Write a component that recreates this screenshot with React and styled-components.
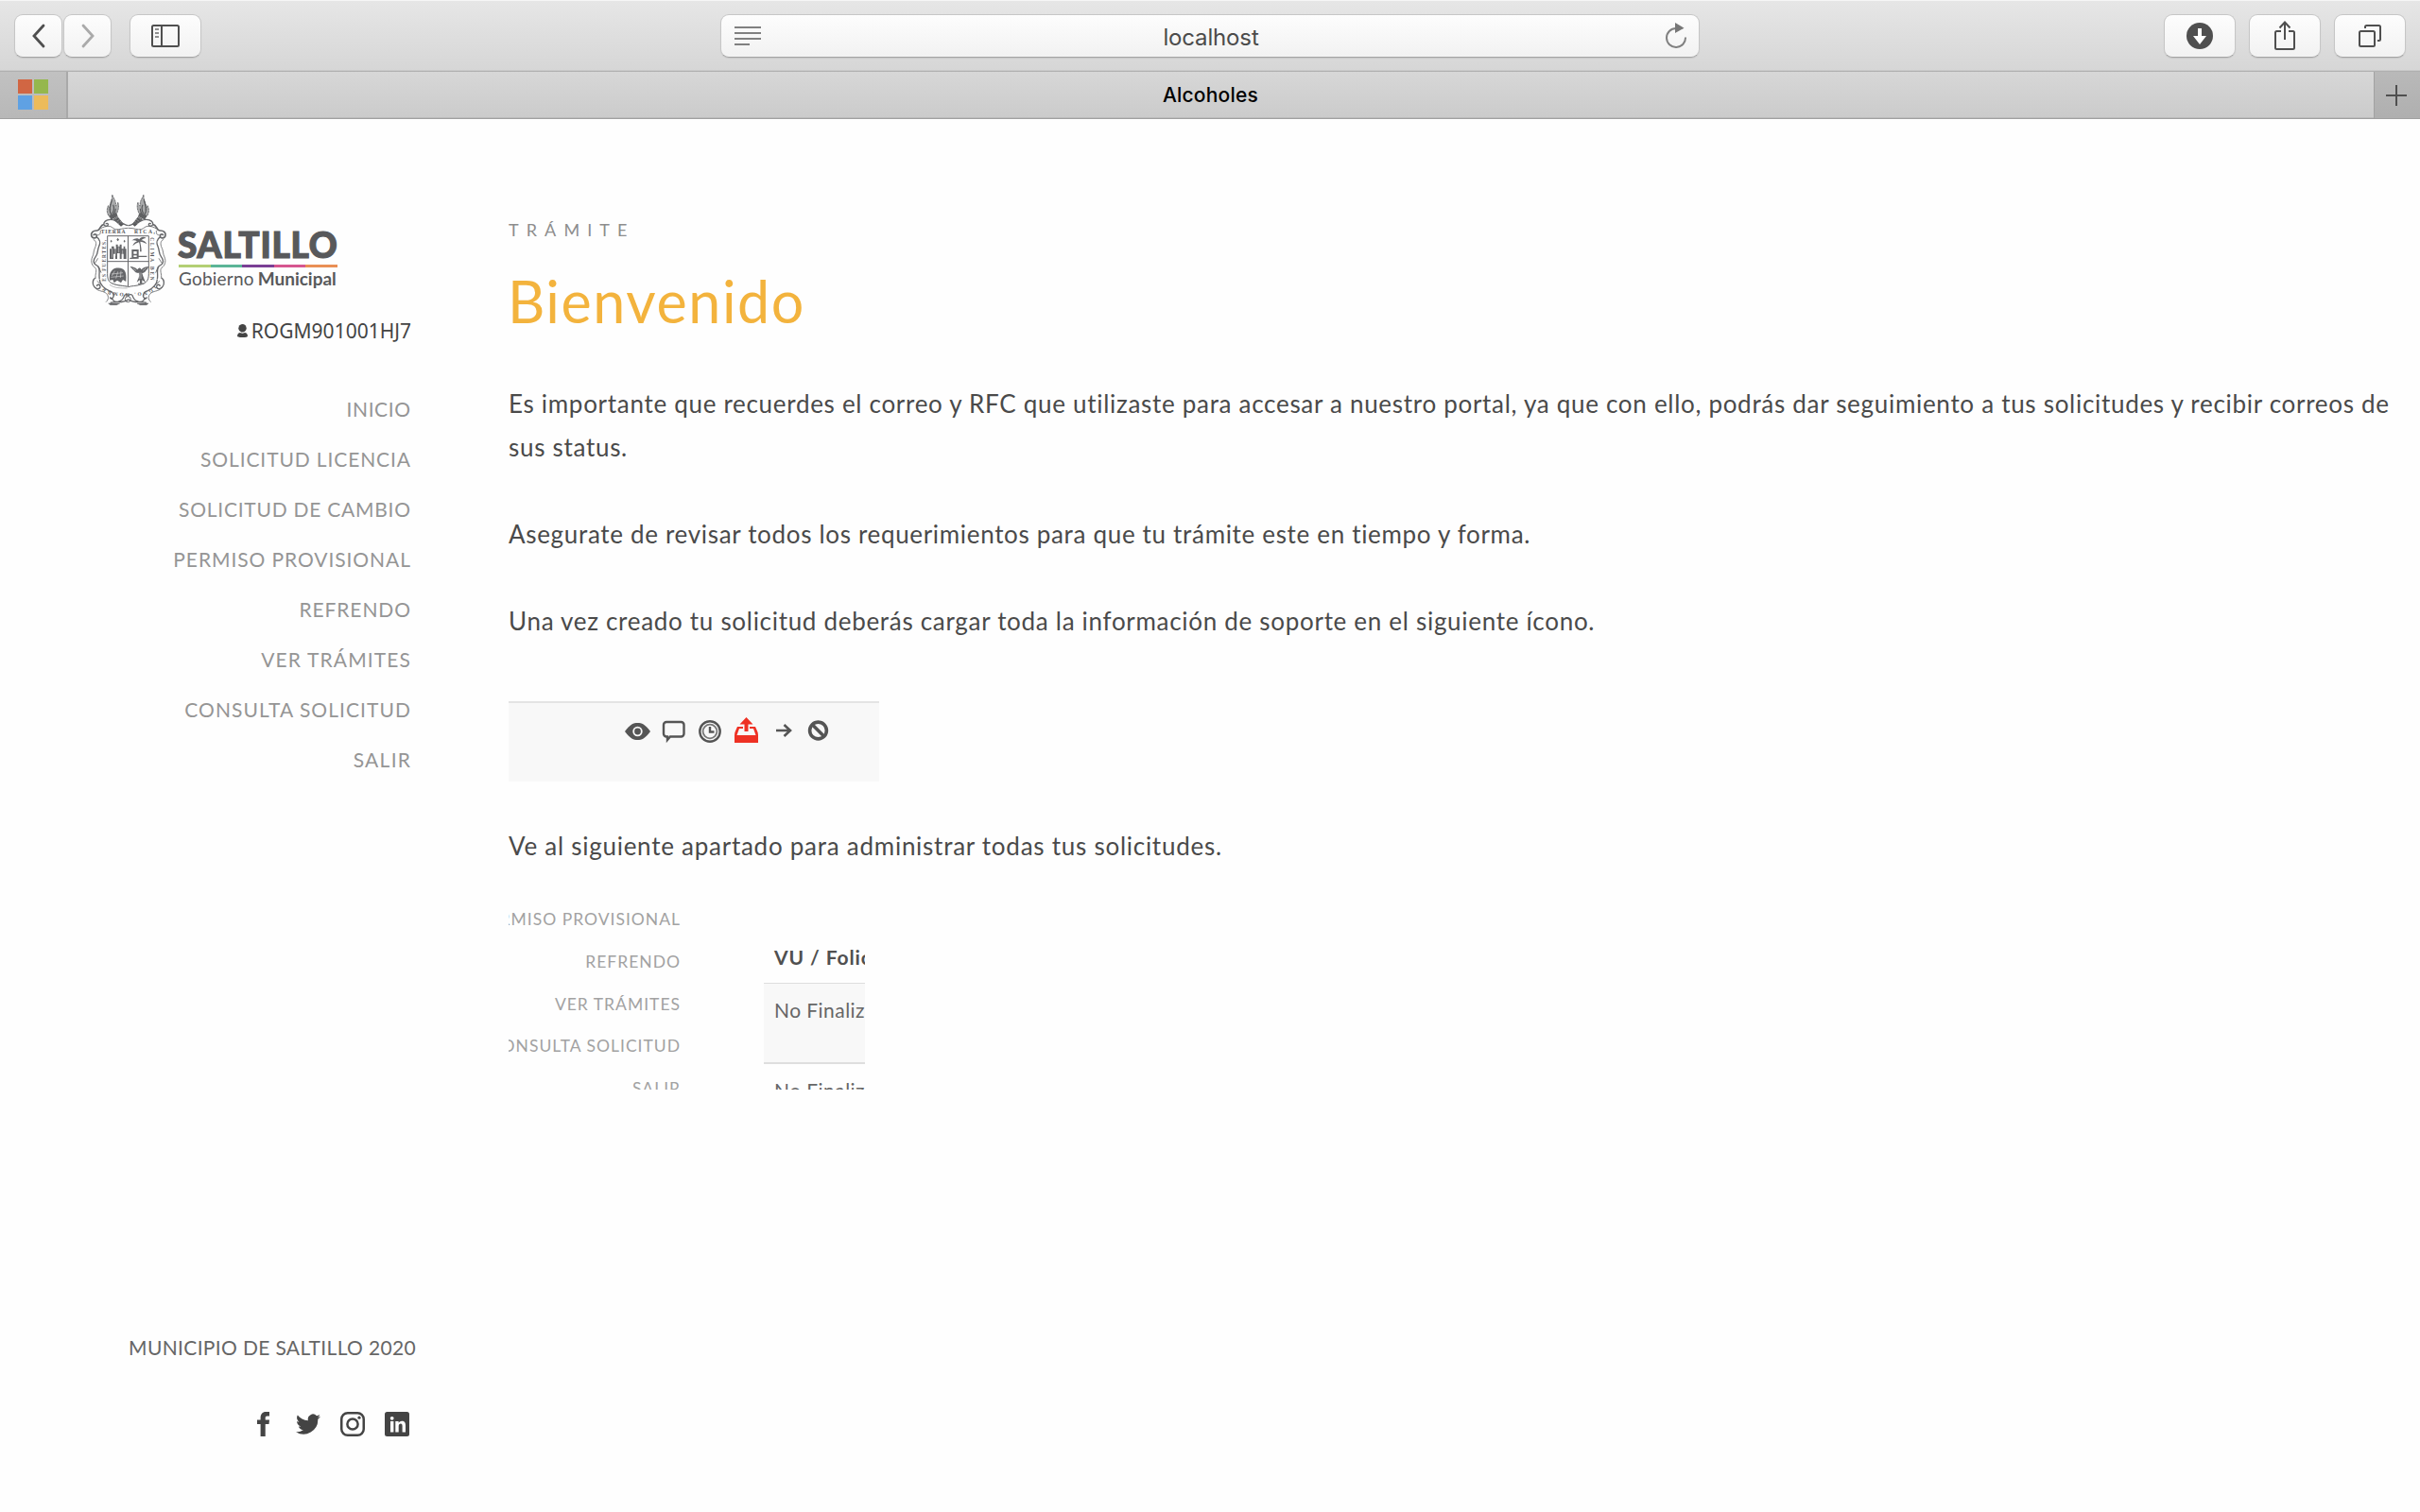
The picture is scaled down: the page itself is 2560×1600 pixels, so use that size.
import React from 'react';
import styled, { createGlobalStyle } from 'styled-components';

const GlobalStyle = createGlobalStyle`
  * { box-sizing: border-box; }
  body {
    margin: 0;
    background: #fefefe;
    color: #4a4a4a;
    font-family: Lato, "Liberation Sans", sans-serif;
    overflow: hidden;
  }
`;

/* ---------- browser window ---------- */

const Window = styled.div`
  display: flex;
  flex-direction: column;
  width: 2560px;
  height: 1600px;
  overflow: hidden;
`;

const Toolbar = styled.header`
  display: flex;
  align-items: flex-start;
  height: 76px;
  padding: 14px 15px 0 15px;
  background: linear-gradient(#e6e6e6, #d6d6d6);
  border-top: 1px solid #f6f6f6;
  border-bottom: 1px solid #b0b0b0;
  box-shadow: inset 0 -1px 0 #cacaca;
`;

const ToolButton = styled.button`
  display: flex;
  align-items: center;
  justify-content: center;
  width: ${(p) => p.$width || 76}px;
  height: 46px;
  margin: 0 0 0 ${(p) => p.$gap || 0}px;
  padding: 0;
  border: 1px solid #c6c6c6;
  border-bottom-color: #a4a4a4;
  border-radius: 9px;
  background: linear-gradient(#fdfdfd, #f2f2f2);
  box-shadow: 0 1px 1px rgba(0, 0, 0, 0.08);
`;

const AddressBar = styled.div`
  display: grid;
  grid-template-columns: 60px 1fr 60px;
  align-items: center;
  width: 1036px;
  height: 46px;
  margin: 0 auto 0 549px;
  padding: 0 12px 0 14px;
  border: 1px solid #c6c6c6;
  border-bottom-color: #a4a4a4;
  border-radius: 9px;
  background: linear-gradient(#fdfdfd, #f2f2f2);
  box-shadow: 0 1px 1px rgba(0, 0, 0, 0.08);
`;

const Address = styled.span`
  padding-top: 4px;
  text-align: center;
  color: #4b4b4b;
  font: 400 24px/30px Inter, sans-serif;
  letter-spacing: -0.15px;
`;

const ReloadSlot = styled.span`
  display: flex;
  justify-content: flex-end;
  padding-bottom: 3px;
`;

const TabStrip = styled.nav`
  display: flex;
  height: 50px;
  border-bottom: 1px solid #a0a0a0;
  box-shadow: inset 0 -1px 0 #bcbcbc;
  background: linear-gradient(#d7d7d7, #cbcbcb);
`;

const PinnedTab = styled.div`
  display: grid;
  grid-template-columns: 15px 15px;
  grid-auto-rows: 15px;
  gap: 2px;
  width: 72px;
  padding: 8px 0 0 19px;
  border-right: 2px solid #a9a9a9;
  background: linear-gradient(#c1c1c1, #b8b8b8);
`;

const Tile = styled.i`
  background: ${(p) => p.$color};
`;

const Tab = styled.div`
  flex: 1;
  padding-right: 22px;
  text-align: center;
  color: #000;
  font: 500 21px/49px Inter, sans-serif;
  letter-spacing: 0.2px;
`;

const NewTab = styled.div`
  display: flex;
  align-items: center;
  justify-content: center;
  width: 49px;
  padding-right: 2px;
  border-left: 1px solid #a2a2a2;
  background: linear-gradient(#b9b9b9, #afafaf);
`;

/* ---------- page ---------- */

const Page = styled.div`
  display: flex;
  flex: 1;
`;

const Sidebar = styled.aside`
  display: flex;
  flex-direction: column;
  width: 538px;
  padding: 74px 104px 80px 88px;
`;

const Brand = styled.div`
  display: flex;
  height: 128px;
`;

const Wordmark = styled.div`
  margin: 39px 0 0 5px;
  color: #58595b;
`;

const CityName = styled.div`
  white-space: nowrap;
  font-size: 37px;
  font-weight: 900;
  line-height: 40px;
  letter-spacing: 0.8px;
  -webkit-text-stroke: 1.2px #58595b;
`;

const Stripe = styled.div`
  display: flex;
  width: 168px;
  height: 3px;
  margin: 1px 0 0 1px;
`;

const StripePart = styled.i`
  flex: 1;
  background: ${(p) => p.$color};
`;

const Office = styled.div`
  display: flex;
  gap: 4px;
  padding-left: 1px;
  white-space: nowrap;
  font-size: 19px;
  line-height: 23px;
  letter-spacing: 0.2px;
  b { letter-spacing: 0; }
`;

const User = styled.div`
  display: flex;
  align-items: center;
  justify-content: flex-end;
  gap: 4px;
  height: 24px;
  margin: 10px -1px 0 0;
  color: #444;
  font: 21px/24px "Noto Sans", sans-serif;
`;

const Menu = styled.ul`
  display: flex;
  flex-direction: column;
  margin: 44px 0 0;
  padding: 0;
  list-style: none;
`;

const MenuItem = styled.li`
  height: 53px;
  margin-right: ${(p) => -p.$track}px;
  text-align: right;
  white-space: nowrap;
  color: #959595;
  font-size: 21px;
  line-height: 53px;
  letter-spacing: ${(p) => p.$track}px;
`;

const Footer = styled.footer`
  display: flex;
  flex-direction: column;
  align-items: flex-end;
  gap: 53px;
  margin-top: auto;
`;

const Copyright = styled.div`
  margin-right: -6px;
  white-space: nowrap;
  color: #666;
  font-size: 21px;
  line-height: 30px;
  letter-spacing: 0.34px;
`;

const Social = styled.div`
  display: flex;
  align-items: center;
  gap: 21px;
  margin-right: 1px;
  color: #444;
  svg:first-child { margin-right: 7px; }
`;

const Main = styled.main`
  flex: 1;
  padding: 105px 20px 0 0;
`;

const Eyebrow = styled.div`
  color: #8d8d8d;
  font-size: 18px;
  line-height: 24px;
  letter-spacing: 8.1px;
`;

const Title = styled.h1`
  margin: 24px 0 45px -1px;
  color: #f3b33d;
  font-size: 61px;
  font-weight: 400;
  line-height: 80px;
  letter-spacing: 1.57px;
`;

const Text = styled.p`
  margin: 0 0 ${(p) => (p.$after === undefined ? 46 : p.$after)}px;
  font-size: 26px;
  line-height: 46px;
  letter-spacing: ${(p) => p.$track || 0.675}px;
`;

const ActionsSample = styled.div`
  display: flex;
  align-items: flex-start;
  width: 392px;
  height: 85px;
  margin-bottom: 45px;
  padding: 14px 0 0 121px;
  border-top: 2px solid #e4e4e4;
  background: #f8f8f8;
`;

const MenuSample = styled.div`
  display: flex;
  justify-content: space-between;
  width: 377px;
  height: 203px;
  overflow: hidden;
`;

const SampleList = styled.div`
  display: flex;
  flex-direction: column;
  align-items: flex-end;
  width: 182px;
  padding-top: 1px;
`;

const SampleItem = styled.div`
  flex: none;
  height: 44.8px;
  white-space: nowrap;
  color: #a2a2a2;
  font-size: 17.5px;
  line-height: 44.8px;
  letter-spacing: 1px;
`;

const SampleTable = styled.div`
  width: 107px;
  padding-top: 43px;
  overflow: hidden;
`;

const SampleHead = styled.div`
  height: 47px;
  padding-left: 11px;
  white-space: nowrap;
  color: #505050;
  font-size: 21px;
  font-weight: 700;
  line-height: 40px;
  letter-spacing: 0.9px;
`;

const SampleRow = styled.div`
  height: 84px;
  padding: 10px 0 0 11px;
  white-space: nowrap;
  color: #666;
  background: ${(p) => (p.$shaded ? '#f8f8f8' : 'transparent')};
  border-top: ${(p) => (p.$shaded ? 1 : 2)}px solid #dedede;
  font-size: 21px;
  line-height: 36px;
  letter-spacing: 0.45px;
`;

/* ---------- drawings ---------- */

const line = { fill: 'none', stroke: '#4f4f4f', strokeWidth: 2 };

const Torch = ({ flip }) => (
  <g transform={flip ? 'translate(284 0) scale(-1 1)' : undefined}>
    <path d="M92 18c4 12 14 20 11 36 6-3 7-8 7-12 6 16 0 28-5 40l-8 10-14-4c-8-10-10-22-3-36 1 6 2 8 5 10-3-16 9-26 7-44z" fill="#a9aaab" stroke="#626365" strokeWidth="2.5" strokeDasharray="7 2" />
    <path d="M91 34c-2 14-9 22-5 34m9-18c5 10 3 18-2 28m10-16c0 8-3 14-7 20M84 64c0 8 3 14 7 20" fill="none" stroke="#58595b" strokeWidth="3.5" />
    <path d="M82 84l22-9 6 11-22 12z" fill="#606163" />
    <path d="M95 96l14-9 20 25-9 7z" fill="#58595b" />
    <path d="M100 97l10-7m-5 14l11-8m-5 14l10-8" stroke="#ddd" strokeWidth="1.3" />
  </g>
);

const FrameHalf = ({ flip }) => (
  <g transform={flip ? 'translate(287 0) scale(-1 1)' : undefined} fill="none" stroke="#66676a" strokeWidth="4">
    <path d="M143 116c-12-1-16-8-27-10-12-3-18-10-30-9-14 1-22 8-20 16 2 7 14 6 13-1-1-4-7-3-7 0" />
    <path d="M143 124c-18 0-28 6-40 4-10-2-12-12-26-10-14 2-20 6-27 12" strokeWidth="2.5" />
    <path d="M66 112c-14 2-10 18-22 20-12-1-20 6-18 16 2 10 17 10 17 1 0-7-10-7-10-1" strokeWidth="5" />
    <path d="M42 152c10 6 14 18 8 30-6 14-2 22-10 32-8 10-10 22 2 28 16 6 6 28 10 44" />
    <path d="M32 160c12 6 10 18 4 30-4 12-2 16-7 26-6 14-1 28 9 34 8 8-2 22 2 34" strokeWidth="2.5" />
    <path d="M38 282c-8 6-10 20-3 28 8 10 20 8 19-1-1-8-12-6-10 0m8-22c0 16 16 30 30 36 16 5 20 20 6 26" />
    <path d="M36 312c8 12 24 11 34 17 10 6 14 20 2 30" strokeWidth="2.5" />
    <path d="M84 345c16 2 6 16 26 13 10-2 18-11 20-18 2-6 8-6 13-3M86 361c18-6 42 4 57-11" />
    <path d="M80 363h36l-10 5H86z" fill="#66676a" strokeWidth="1.5" />
    <path d="M55 132c0 14-4 14-10 14M47 220l-10 16m12 10l8 20M44 292l9 8" strokeWidth="2.5" />
  </g>
);

const Crest = () => (
  <svg width="95" height="128" viewBox="0 0 285 384">
    <Torch />
    <Torch flip />
    <FrameHalf />
    <FrameHalf flip />
    <g fill="none" stroke="#66676a" strokeWidth="3">
      <path d="M77 149h131v120c0 22-8 29-24 34-18 6-32 4-41 8-9-4-27-3-45-9-16-5-21-12-21-33zM142.500 149v160M77 230h131" />
      <circle cx="142" cy="350" r="9" />
    </g>
    <g fill="#66676a">
      <path d="M84 222v-32h6v-8h8v8h6v-14h6v6h6v-6h6v14h6v-8h5v8h4v32h-9v-16h-6v16h-6v-18h-8v18h-6v-16h-6v16z" />
      <path d="M86 166l3-5 3 5-3 4zM106 161l4-6 4 6-4 5zM128 166l3-5 3 5-3 4z" />
      <path d="M148 222v-4h6v-26h22v20h26v4h-26v5zM160 198v8h10v-8zm0 13v5h10v-5z" fillRule="evenodd" />
      <path d="M154 164c12-10 20-8 24-4 4-8 14-10 22-4-8 0-12 3-16 7 8 0 14 4 18 12-8-5-14-8-21-8 1 10 4 18 4 32h-5c1-12 0-22-3-30-8 2-14 6-20 12 2-8 8-13 14-15-6-4-12-3-17-2z" />
      <path d="M84 290c-2-20 3-32 16-38 14-3 28-2 34 12 4 12 2 22 2 30l-10-6-6 10-12-8-10 8-4-10z" />
      <path d="M172 256c5-9 12-6 12 0 8-7 14-10 25-10-6 6-3 8-9 12-3 6-6 8-13 9l3 10 8 20-11-8v10h6v3h-19v-3h6v-10l-10 7 8-20-1-9c-9 0-13-3-16-8-6-4-6-8-13-13 11 1 18 3 24 10z" />
    </g>
    <g stroke="#eee" strokeWidth="1.500" fill="none">
      <path d="M92 188v30m10-32v26m11-28v18m12-8v24M91 276l9-16m4 24l6-22m8 20l2-22m-30 10l36-4m-38 14l40-4M158 252l10 7m32-8l-11 8m-12 6v20m6-20v20" />
    </g>
    <path d="M84 304c18 12 34 10 56 11M88 298c16 8 30 9 52 10" stroke="#77787a" strokeWidth="1.500" fill="none" />
    <defs>
      <path id="crest-left" d="M72 293V157" />
      <path id="crest-right" d="M214 154V296" />
      <path id="crest-base" d="M228 297C216 332 190 326 143 331C98 326 72 334 58 296" />
    </defs>
    <g fill="#58595b" fontFamily="Liberation Serif, serif" fontWeight="700" fontSize="17">
      <text x="56" y="142" textLength="78">TIERRA</text>
      <text x="162" y="142" textLength="66">RICA,</text>
      <text fontSize="16"><textPath href="#crest-left" textLength="132">ES FUERTES,</textPath></text>
      <text fontSize="16"><textPath href="#crest-right" textLength="136">CLIMA BEN</textPath></text>
      <text fontSize="16"><textPath href="#crest-base" startOffset="10" textLength="170">IGNO. HOMBR</textPath></text>
    </g>
  </svg>
);

const BackIcon = ({ forward }) => (
  <svg width="14" height="26" viewBox="0 0 14 26" fill="none" stroke={forward ? '#aaa' : '#4f4f4f'} strokeWidth="2.8" strokeLinecap="round">
    <path d={forward ? 'M2 2l10 11L2 24' : 'M12 2L2 13l10 11'} />
  </svg>
);

const SidebarIcon = () => (
  <svg width="30" height="24" viewBox="0 0 30 24">
    <rect x="1" y="1" width="28" height="22" rx="1.500" {...line} />
    <path d="M11 1v22" {...line} />
    <path d="M4 5h4M4 9h4M4 13h4" stroke="#909090" strokeWidth="2" />
  </svg>
);

const ReaderIcon = () => (
  <svg width="28" height="20" viewBox="0 0 28 20">
    <path d="M0 1h28M0 7h28M0 13h28M0 19h16" stroke="#808080" strokeWidth="2" />
  </svg>
);

const ReloadIcon = () => (
  <svg width="24" height="28" viewBox="0 0 24 28">
    <path d="M12 7a10 10 0 1 0 10 9.500" fill="none" stroke="#808080" strokeWidth="2" />
    <path d="M11 1l9.500 5.700-9.500 5.300z" fill="#777" />
  </svg>
);

const DownloadIcon = () => (
  <svg width="28" height="28" viewBox="0 0 28 28">
    <circle cx="14" cy="14" r="14" fill="#4f4f4f" />
    <path d="M12 6h4v8h5l-7 9-7-9h5z" fill="#fff" />
  </svg>
);

const ShareIcon = () => (
  <svg width="24" height="32" viewBox="0 0 24 32">
    <path d="M8 11H3.500a1.500 1.500 0 0 0-1.500 1.500v16A1.500 1.500 0 0 0 3.500 30h17a1.500 1.500 0 0 0 1.500-1.500v-16a1.500 1.500 0 0 0-1.500-1.500H16M12 20V2M6.500 7.500L12 1.500l5.500 6" {...line} />
  </svg>
);

const WindowsIcon = () => (
  <svg width="26" height="26" viewBox="0 0 26 26">
    <rect x="2" y="8" width="16" height="16" rx="1.500" {...line} />
    <path d="M8 5V3.500A1.500 1.500 0 0 1 9.500 2h13A1.500 1.500 0 0 1 24 3.500v13a1.500 1.500 0 0 1-1.500 1.500H21" {...line} />
  </svg>
);

const PlusIcon = () => (
  <svg width="22" height="22" viewBox="0 0 22 22">
    <path d="M11 0v22M0 11h22" {...line} />
  </svg>
);

const UserIcon = () => (
  <svg width="11" height="15" viewBox="0 0 11 15" fill="#444">
    <ellipse cx="5.500" cy="4.300" rx="4.200" ry="4.300" />
    <path d="M0 12.500C0 10 2 9 3 9c2 1 3 1 5 0 1 0 3 1 3 3.500 0 1-2 1.500-5.500 1.500S0 13.500 0 12.500z" />
  </svg>
);

const ActionIcons = () => (
  <svg width="220" height="36" viewBox="0 0 220 36" fill="none" stroke="#555" strokeWidth="2.400">
    <path d="M2 16C8 8 11 7 15.500 7S23 8 29 16c-6 8-9 9-13.500 9S8 24 2 16z" fill="#555" stroke="none" />
    <circle cx="15.500" cy="16" r="4.300" stroke="#f8f8f8" strokeWidth="1.800" fill="#555" />
    <path d="M46 6h15.500a3 3 0 0 1 3 3v9.500a3 3 0 0 1-3 3H50l-3 3.500v-3.500h-1a3 3 0 0 1-3-3V9a3 3 0 0 1 3-3z" />
    <circle cx="92" cy="16" r="10.700" strokeWidth="2.400" />
    <circle cx="92" cy="16" r="7.400" strokeWidth="1.800" stroke="#777" />
    <path d="M92 11v5.500h4.500" strokeWidth="2.400" />
    <g stroke="none" fill="#ee3124">
      <path d="M130.500 1l7 7.500h-5V16h-4V8.500h-5z" />
      <path d="M118 20c0-4 2-6 3-9h6v2h-4l-2.500 7h20L138 13h-4v-2h6c1 3 3 5 3 9v8h-25z" />
    </g>
    <path d="M162 15h15M170.500 9l6.500 6-6.500 6" strokeWidth="2.600" />
    <circle cx="206.500" cy="15" r="8.900" strokeWidth="3.600" />
    <path d="M200.500 9l12 12" strokeWidth="3.600" />
  </svg>
);

const FacebookIcon = () => (
  <svg width="13" height="26" viewBox="0 0 13 26" fill="currentColor">
    <path d="M3.600 26V13H0V8.500h3.600V6.500c0-4 2-6.500 5.700-6.500H13v4.500h-2.300c-1.700 0-2 .7-2 2v2H13l-.5 4.500H8.700v13z" />
  </svg>
);

const TwitterIcon = () => (
  <svg width="26" height="22" viewBox="0 1.800 24 20.300" fill="currentColor">
    <path d="M24 4.600c-.9.400-1.800.7-2.800.8 1-.6 1.800-1.600 2.200-2.700-1 .6-2 1-3.100 1.200a4.900 4.900 0 0 0-8.400 4.500C7.700 8.200 4.100 6.300 1.700 3.200a4.900 4.900 0 0 0 1.500 6.600c-.8 0-1.600-.2-2.200-.6v.1c0 2.300 1.700 4.300 3.900 4.800-.7.200-1.500.2-2.200.1.600 1.900 2.400 3.400 4.600 3.400A9.900 9.900 0 0 1 0 19.500a14 14 0 0 0 21.500-12.400c1-.7 1.800-1.600 2.500-2.500z" />
  </svg>
);

const InstagramIcon = () => (
  <svg width="26" height="26" viewBox="0 0 26 26" fill="none" stroke="currentColor" strokeWidth="2.500">
    <rect x="1.250" y="1.250" width="23.500" height="23.500" rx="6.500" />
    <circle cx="13" cy="13" r="5.600" />
    <circle cx="20" cy="6.200" r="1.600" fill="currentColor" stroke="none" />
  </svg>
);

const LinkedinIcon = () => (
  <svg width="26" height="26" viewBox="0 0 26 26">
    <rect width="26" height="26" rx="2.500" fill="currentColor" />
    <g fill="#fff">
      <circle cx="7.700" cy="6.800" r="1.900" />
      <path d="M6 10h3.400v11.500H6zM11.300 10h3.300v1.700c.6-1 1.800-2 3.500-2 3 0 3.900 2 3.900 4.700v7.100h-3.400V15c0-1.500-.4-2.500-1.700-2.500s-2.200 1-2.200 2.700v6.300h-3.400z" />
    </g>
  </svg>
);

/* ---------- content ---------- */

const tiles = ['#d16643', '#95b74d', '#5fa1e3', '#ecbb5a'];
const stripe = ['#b3cf74', '#5bb597', '#7a3f95', '#d6568f', '#e98f55'];
const menu = [
  ['INICIO', 0.58],
  ['SOLICITUD LICENCIA', 0.88],
  ['SOLICITUD DE CAMBIO', 0.75],
  ['PERMISO PROVISIONAL', 0.92],
  ['REFRENDO', 0.89],
  ['VER TRÁMITES', 1.14],
  ['CONSULTA SOLICITUD', 1.06],
  ['SALIR', 1.3],
];
const sampleMenu = ['PERMISO PROVISIONAL', 'REFRENDO', 'VER TRÁMITES', 'CONSULTA SOLICITUD', 'SALIR'];

export default function App() {
  return (
    <Window>
      <GlobalStyle />
      <Toolbar>
        <ToolButton $width={51}><BackIcon /></ToolButton>
        <ToolButton $width={51} $gap={1}><BackIcon forward /></ToolButton>
        <ToolButton $gap={19}><SidebarIcon /></ToolButton>
        <AddressBar>
          <ReaderIcon />
          <Address>localhost</Address>
          <ReloadSlot><ReloadIcon /></ReloadSlot>
        </AddressBar>
        <ToolButton><DownloadIcon /></ToolButton>
        <ToolButton $gap={14}><ShareIcon /></ToolButton>
        <ToolButton $gap={14}><WindowsIcon /></ToolButton>
      </Toolbar>
      <TabStrip>
        <PinnedTab>{tiles.map((c) => <Tile key={c} $color={c} />)}</PinnedTab>
        <Tab>Alcoholes</Tab>
        <NewTab><PlusIcon /></NewTab>
      </TabStrip>
      <Page>
        <Sidebar>
          <Brand>
            <Crest />
            <Wordmark>
              <CityName>SALTILLO</CityName>
              <Stripe>{stripe.map((c) => <StripePart key={c} $color={c} />)}</Stripe>
              <Office><span>Gobierno</span><b>Municipal</b></Office>
            </Wordmark>
          </Brand>
          <User><UserIcon />ROGM901001HJ7</User>
          <Menu>
            {menu.map(([label, track]) => <MenuItem key={label} $track={track}>{label}</MenuItem>)}
          </Menu>
          <Footer>
            <Copyright>MUNICIPIO DE SALTILLO 2020</Copyright>
            <Social><FacebookIcon /><TwitterIcon /><InstagramIcon /><LinkedinIcon /></Social>
          </Footer>
        </Sidebar>
        <Main>
          <Eyebrow>TRÁMITE</Eyebrow>
          <Title>Bienvenido</Title>
          <Text $track={0.703}>
            Es importante que recuerdes el correo y RFC que utilizaste para accesar a nuestro portal, ya que
            con ello, podrás dar seguimiento a tus solicitudes y recibir correos de sus status.
          </Text>
          <Text>Asegurate de revisar todos los requerimientos para que tu trámite este en tiempo y forma.</Text>
          <Text $track={0.7} $after={62}>
            Una vez creado tu solicitud deberás cargar toda la información de soporte en el siguiente ícono.
          </Text>
          <ActionsSample><ActionIcons /></ActionsSample>
          <Text $track={0.74} $after={32}>Ve al siguiente apartado para administrar todas tus solicitudes.</Text>
          <MenuSample>
            <SampleList>{sampleMenu.map((label) => <SampleItem key={label}>{label}</SampleItem>)}</SampleList>
            <SampleTable>
              <SampleHead>VU / Folio</SampleHead>
              <SampleRow $shaded>No Finalizado</SampleRow>
              <SampleRow>No Finalizado</SampleRow>
            </SampleTable>
          </MenuSample>
        </Main>
      </Page>
    </Window>
  );
}
